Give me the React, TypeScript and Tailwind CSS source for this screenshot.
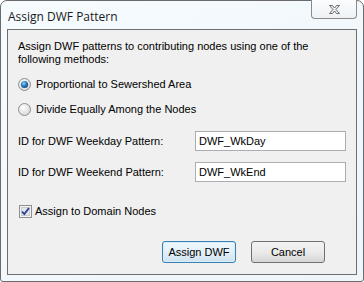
import React from "react";

function Radio({ checked }: { checked?: boolean }) {
  return (
    <svg width="13" height="13" viewBox="0 0 13 13" className="shrink-0">
      <defs>
        <radialGradient id="rbg" cx="40%" cy="35%" r="70%">
          <stop offset="0" stopColor="#ffffff" />
          <stop offset="1" stopColor="#d4d4d4" />
        </radialGradient>
        <radialGradient id="rdot" cx="40%" cy="35%" r="70%">
          <stop offset="0" stopColor="#9bd3f5" />
          <stop offset="0.5" stopColor="#2a7fc4" />
          <stop offset="1" stopColor="#0a3f80" />
        </radialGradient>
      </defs>
      <circle cx="6.5" cy="6.5" r="6" fill="url(#rbg)" stroke="#8e8f8f" strokeWidth="1" />
      {checked && <circle cx="6.5" cy="6.5" r="3.6" fill="url(#rdot)" />}
    </svg>
  );
}

function Checkbox() {
  return (
    <svg width="13" height="13" viewBox="0 0 13 13" className="shrink-0">
      <rect x="0.5" y="0.5" width="12" height="12" fill="#f4f4f4" stroke="#8e8f8f" />
      <rect x="2.5" y="2.5" width="8" height="8" fill="#e2e5ea" stroke="#c7cbd2" />
      <path d="M3 6.5 L5.3 9 L10 3" fill="none" stroke="#2b3f8f" strokeWidth="1.8" />
    </svg>
  );
}

function Field({ label, value }: { label: string; value: string }) {
  return (
    <div className="flex items-center h-[20px]">
      <span className="w-[187px] pl-[10px] shrink-0">{label}</span>
      <div className="w-[151px] h-[20px] bg-white border border-[#abadb3] flex items-center px-[3px]">
        {value}
      </div>
    </div>
  );
}

function Button({ label, focused }: { label: string; focused?: boolean }) {
  return (
    <div
      className={`w-[74px] h-[22px] rounded-[3px] border flex items-center justify-center bg-gradient-to-b ${
        focused
          ? "border-[#3c7fb1] from-[#eef7fc] via-[#e3f0f8] to-[#cfe3f0] shadow-[inset_0_0_0_1px_#d6eefb]"
          : "border-[#707070] from-[#f2f2f2] via-[#ebebeb] to-[#d6d6d6]"
      }`}
    >
      {label}
    </div>
  );
}

export default function App() {
  return (
    <div className="w-[364px] h-[282px] rounded-t-[7px] rounded-b-[3px] border border-[#6b6b6b] bg-gradient-to-br from-[#f6fbfe] to-[#eef6fb] flex flex-col px-[6px] pb-[6px] text-[11px] leading-[13px] text-black [font-family:'Liberation_Sans',Arial,sans-serif]">
      <div className="h-[28px] flex items-start relative">
        <span className="pl-[1px] pt-[9px] text-[12px] leading-[14px] text-[#1a1a1a] [font-family:'Open_Sans','Noto_Sans',sans-serif]">
          Assign DWF Pattern
        </span>
        <div className="absolute right-[0px] -top-px w-[46px] h-[19px] rounded-b-[4px] border border-[#8a8a8a] border-t-0 bg-gradient-to-b from-[#fbfdfe] to-[#eef2f5] flex items-center justify-center">
          <svg width="13" height="11" viewBox="0 0 13 11">
            <path
              d="M1.5 1.5 H4.5 L6.5 4 L8.5 1.5 H11.5 L8 5.5 L11.5 9.5 H8.5 L6.5 7 L4.5 9.5 H1.5 L5 5.5 Z"
              fill="#eeeeee"
              stroke="#6d6d6d"
              strokeWidth="1"
              strokeLinejoin="round"
            />
          </svg>
        </div>
      </div>
      <div className="flex-1 border border-[#6e6e6e] bg-[#f0f0f0] flex flex-col">
        <p className="pl-[10px] pt-[10px] w-[330px]">
          Assign DWF patterns to contributing nodes using one of the following methods:
        </p>
        <div className="mt-[10px] pl-[10px] h-[16px] flex items-center gap-[5px]">
          <Radio checked />
          <span>Proportional to Sewershed Area</span>
        </div>
        <div className="mt-[9px] pl-[10px] h-[16px] flex items-center gap-[5px]">
          <Radio />
          <span>Divide Equally Among the Nodes</span>
        </div>
        <div className="mt-[14px]">
          <Field label="ID for DWF Weekday Pattern:" value="DWF_WkDay" />
        </div>
        <div className="mt-[11px]">
          <Field label="ID for DWF Weekend Pattern:" value="DWF_WkEnd" />
        </div>
        <div className="mt-[21px] pl-[11px] h-[16px] flex items-center gap-[3px]">
          <Checkbox />
          <span>Assign to Domain Nodes</span>
        </div>
        <div className="mt-[22px] flex gap-[15px] pl-[154px]">
          <Button label="Assign DWF" focused />
          <Button label="Cancel" />
        </div>
      </div>
    </div>
  );
}
